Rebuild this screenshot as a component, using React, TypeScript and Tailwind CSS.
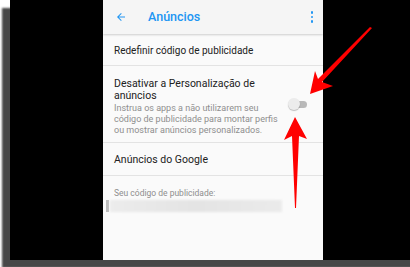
import React from 'react';

const font = { fontFamily: 'Roboto, "Noto Sans", sans-serif' };

const Row: React.FC<{ children: React.ReactNode; className?: string }> = ({ children, className = '' }) => (
  <div className={`border-b border-[#e3e3e3] pl-[11px] pr-[12px] ${className}`}>{children}</div>
);

export default function App() {
  return (
    <div className="w-[410px] h-[267px] bg-white overflow-hidden relative" style={font}>
      <div className="pl-[10px]">
        <div className="w-[410px] h-[260px] bg-black shadow-[-8px_8px_2px_#474747] flex">
          <div className="ml-[93px] w-[220px] h-full bg-[#fafafa] flex flex-col">
            {/* app bar */}
            <div className="h-[34px] shrink-0 bg-[#f5f5f5] flex items-center pl-[12px] pr-[10px] shadow-[0_1px_2px_rgba(0,0,0,0.18)] z-10">
              <svg width="12" height="12" viewBox="0 0 24 24" className="text-[#2196f3]">
                <path fill="currentColor" d="M20 11H7.83l5.59-5.59L12 4l-8 8 8 8 1.41-1.41L7.83 13H20v-2z" />
              </svg>
              <span className="ml-[21px] text-[12.5px] font-medium text-[#2196f3]">Anúncios</span>
              <div className="ml-auto flex flex-col gap-[2px]">
                <span className="w-[2.5px] h-[2.5px] rounded-full bg-[#2196f3]" />
                <span className="w-[2.5px] h-[2.5px] rounded-full bg-[#2196f3]" />
                <span className="w-[2.5px] h-[2.5px] rounded-full bg-[#2196f3]" />
              </div>
            </div>

            <Row className="h-[32px] flex items-center pt-[1px]">
              <span className="text-[10px] text-[#212121]">Redefinir código de publicidade</span>
            </Row>

            <Row className="h-[77px] flex items-start pt-[12px]">
              <div className="whitespace-nowrap">
                <div className="text-[10.5px] leading-[11.5px] text-[#212121]">
                  Desativar a Personalização de<br />anúncios
                </div>
                <div className="mt-[2px] text-[9px] leading-[11px] text-[#8e8e8e]">
                  Instrua os apps a não utilizarem seu<br />
                  código de publicidade para montar perfis<br />
                  ou mostrar anúncios personalizados.
                </div>
              </div>
              <div className="ml-auto mr-[4px] mt-[20px] relative w-[17px] h-[12px] flex items-center">
                <div className="w-[17px] h-[7px] rounded-full bg-[#b9b9b9]" />
                <div className="absolute left-[-2px] top-0 w-[12px] h-[12px] rounded-full bg-[#ececec] shadow-[0_1px_1px_rgba(0,0,0,0.25)]" />
              </div>
            </Row>

            <Row className="h-[33px] flex items-center pt-[2px]">
              <span className="text-[10.5px] text-[#212121]">Anúncios do Google</span>
            </Row>

            <div className="pt-[12px] pl-[11px]">
              <div className="text-[8.5px] leading-[10px] text-[#8e8e8e]">Seu código de publicidade:</div>
              <div className="mt-[2px] -ml-[8px] h-[12px] flex items-stretch">
                <div className="w-[3px] bg-[#bdbdbd]" />
                <div className="ml-[1px] w-[172px] bg-gradient-to-r from-[#ececec] via-[#e4e4e4] to-[#ebebeb] blur-[1px]" />
              </div>
            </div>
          </div>
        </div>
      </div>

      {/* red arrows */}
      <svg className="absolute inset-0" width="410" height="267" viewBox="0 0 410 267">
        <polygon fill="#ff0000" points="372,28 322,82 333,86 310,94 315,71 318,79 370,27" />
        <polygon fill="#ff0000" points="295,117 307,139 299,136 296,208 295,208 292,136 284,140" />
      </svg>
    </div>
  );
}
